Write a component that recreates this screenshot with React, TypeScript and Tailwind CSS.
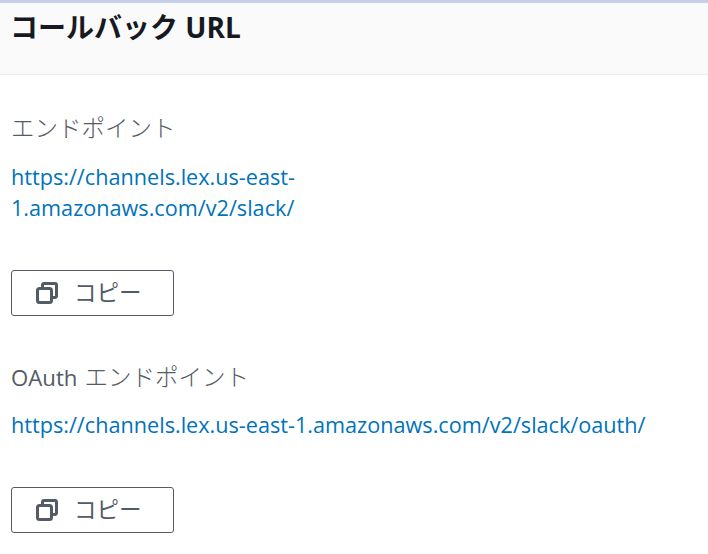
const stack = { fontFamily: '"Open Sans", "Noto Sans CJK JP", sans-serif' };

function CopyButton() {
  return (
    <button className="flex h-[46px] w-[163px] items-center rounded-[3px] border border-[#545b64] bg-white pl-[24px] text-[#545b64]">
      <svg width="22" height="22" viewBox="0 0 22 22" fill="none" stroke="#545b64" strokeWidth="3">
        <rect x="1.5" y="6.500" width="14" height="14" rx="2" />
        <path d="M6.500 6V3A1.500 1.500 0 0 1 8 1.500H19A1.500 1.500 0 0 1 20.500 3V14A1.500 1.500 0 0 1 19 15.500H16" />
      </svg>
      <span className="ml-[16px] text-[22.500px] leading-none">コピー</span>
    </button>
  );
}

export default function App() {
  return (
    <div className="h-[554px] w-[708px] overflow-hidden bg-white" style={stack}>
      <div className="h-[3px] bg-[#c5d0e6]" />
      <div className="h-[72px] border-b border-[#eaeded] bg-[#fafafa] pl-[10px] pt-[5px]">
        <h2 className="text-[28px] leading-[38px] font-bold text-[#16191f]">コールバック URL</h2>
      </div>
      <div className="pl-[11px] pt-[36px]">
        <div className="text-[23.500px] leading-[34px] font-light text-[#545b64]">エンドポイント</div>
        <a className="mt-[16px] block w-[300px] text-[21.650px] leading-[31px] text-[#0073bb]">https://channels.lex.us-east-1.amazonaws.com/v2/slack/</a>
        <div className="mt-[47px]"><CopyButton /></div>
        <div className="mt-[44px] text-[23.500px] leading-[34px] font-light text-[#545b64]"><span className="text-[22.200px] font-normal">OAuth</span><span className="ml-[7px]">エンドポイント</span></div>
        <a className="mt-[15px] block text-[21.650px] leading-[30px] text-[#0073bb]">https://channels.lex.us-east-1.amazonaws.com/v2/slack/oauth/</a>
        <div className="mt-[47px]"><CopyButton /></div>
      </div>
    </div>
  );
}
